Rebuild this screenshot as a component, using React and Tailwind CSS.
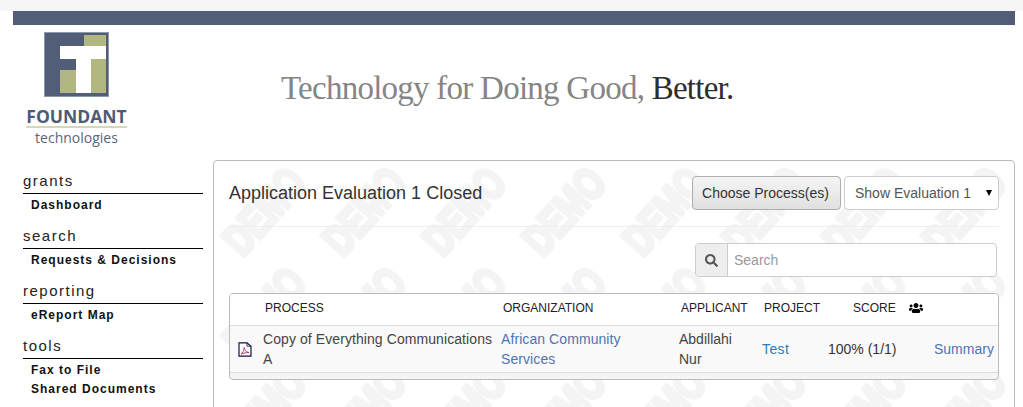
import { FaSearch, FaUsers } from "react-icons/fa";

const menu = [
  { title: "grants", items: ["Dashboard"] },
  { title: "search", items: ["Requests & Decisions"] },
  { title: "reporting", items: ["eReport Map"] },
  { title: "tools", items: ["Fax to File", "Shared Documents"] },
];

const marks = [];
for (let row = 0; row < 3; row++) {
  for (let col = 0; col < 8; col++) {
    marks.push({ key: `${row}-${col}`, left: col * 100 + 50, top: row * 100 + 50 });
  }
}

function Logo() {
  return (
    <div className="flex flex-col items-center w-[101px] ml-[26px] mt-[7px]">
      <svg width="65" height="65" viewBox="0 0 65 65" className="block">
        <rect x="0.5" y="0.5" width="64" height="64" fill="#525e78" stroke="#8f98ab" />
        <rect x="40" y="3" width="22" height="11" fill="#b2b781" />
        <rect x="16" y="38" width="16" height="23" fill="#b2b781" />
        <rect x="47" y="27" width="15" height="34" fill="#b2b781" />
        <rect x="16" y="14" width="46" height="13" fill="#fff" />
        <rect x="32" y="14" width="15" height="47" fill="#fff" />
      </svg>
      <div className="mt-[10px] font-['Open_Sans',sans-serif] font-bold text-[17.5px] leading-[19px] text-[#4f5b75] border-b-2 border-[#d5d8b8] whitespace-nowrap">
        FOUNDANT
      </div>
      <div className="font-['Open_Sans',sans-serif] text-[14px] leading-[16px] text-[#5a6580] mt-[2px]">technologies</div>
    </div>
  );
}

export default function App() {
  return (
    <div className="relative h-[407px] w-[1023px] overflow-hidden bg-white font-['Liberation_Sans',Arial,sans-serif] text-[#333]">
      <div className="h-[11px] bg-[#f6f6f6]" />
      <div className="h-[14px] mx-[13px] w-[1002px] bg-[#525e78]" />

      <div className="flex h-[135px] items-start">
        <Logo />
        <div className="ml-[154px] mt-[39px] font-['Liberation_Serif',serif] text-[33px] leading-[48px] tracking-[-0.75px] text-[#858585] whitespace-nowrap">
          Technology for Doing Good, <span className="text-[#2e2e2e]">Better.</span>
        </div>
      </div>

      <div className="flex">
        <nav className="w-[180px] ml-[23px] pt-[12px] shrink-0">
          {menu.map((group) => (
            <div key={group.title} className="mb-[12px] min-h-[43px]">
              <div className="border-b border-black text-[15px] leading-[18px] h-[22px] tracking-[1.5px] text-[#222]">{group.title}</div>
              <ul className="mt-[2px]">
                {group.items.map((item) => (
                  <li key={item} className="pl-[8px] text-[12px] leading-[19px] font-bold tracking-[1px] text-[#111] whitespace-nowrap">
                    {item}
                  </li>
                ))}
              </ul>
            </div>
          ))}
        </nav>

        <main className="relative ml-[10px] w-[802px] h-[300px] border border-[#bbb] rounded-[4px] overflow-hidden">
          {/* watermark */}
          <div className="absolute inset-0 overflow-hidden select-none">
            {marks.map((m) => (
              <span
                key={m.key}
                className="absolute -translate-x-1/2 -translate-y-1/2 rotate-[-48deg] scale-y-[1.35] font-['Liberation_Sans',sans-serif] font-bold text-[33px] leading-none text-[#f4f4f4] [-webkit-text-stroke:3px_#f4f4f4]"
                style={{ left: m.left, top: m.top }}
              >
                DEMO
              </span>
            ))}
          </div>

          <div className="relative px-[15px]">
            <div className="flex items-center justify-between h-[66px] border-b border-[#eee]">
              <h1 className="text-[18px] leading-[20px] mb-[2px] text-[#333]">Application Evaluation 1 Closed</h1>
              <div className="flex gap-[3px] mb-[2px]">
                <button className="h-[34px] w-[149px] rounded-[4px] border border-[#adadad] bg-gradient-to-b from-[#f5f5f5] to-[#e0e0e0] pt-[1px] pr-[2px] text-[14px] text-[#333]">
                  Choose Process(es)
                </button>
                <div className="relative h-[34px] w-[155px] rounded-[4px] border border-[#ccc] bg-white text-[14px] leading-[32px] pl-[10px] text-[#555]">
                  Show Evaluation 1
                  <span className="absolute right-[6px] top-[13px] h-0 w-0 border-x-[3.5px] border-t-[6px] border-x-transparent border-t-black" />
                </div>
              </div>
            </div>

            <div className="flex justify-end mt-[16px] mr-[2px]">
              <div className="flex h-[34px] w-[302px] rounded-[4px] border border-[#ccc] bg-white">
                <div className="flex w-[32px] items-center justify-center rounded-l-[3px] border-r border-[#ccc] bg-[#eee]">
                  <FaSearch size={13} className="text-[#555]" />
                </div>
                <div className="pl-[6px] text-[14px] leading-[32px] text-[#999]">Search</div>
              </div>
            </div>

            <div className="mt-[16px] h-[87px] rounded-[4px] border border-[#bbb] overflow-hidden bg-[#f5f5f5]">
              <div className="flex h-[31px] items-center pb-[3px] bg-white text-[12px] text-[#222]">
                <span className="ml-[35px] w-[238px]">PROCESS</span>
                <span className="w-[178px]">ORGANIZATION</span>
                <span className="w-[83px]">APPLICANT</span>
                <span className="w-[89px]">PROJECT</span>
                <span className="w-[56px]">SCORE</span>
                <FaUsers size={14} className="text-black" />
              </div>
              <div className="flex h-[48px] items-center border-y border-[#ddd] bg-[#f9f9f9] text-[14px] leading-[20px]">
                <svg width="14" height="15" viewBox="0 0 14 15" fill="#fff" stroke="#1a1040" strokeWidth="1.2" className="ml-[8px] mr-[11px] shrink-0">
                  <path d="M1 .8h8l4 3.4v10H1z" />
                  <path d="M9 .8v3.4h4" fill="none" strokeWidth="0.8" />
                  <path d="M3 12c2-1 3-3.5 3.2-6.5.4 2.7 2 4.5 4.8 5-3 0-5 .6-8 1.5z" fill="none" stroke="#b0306a" strokeWidth="0.9" />
                </svg>
                <span className="w-[238px] text-[#444] tracking-[0.08px]">Copy of Everything Communications A</span>
                <span className="w-[178px] pr-[40px] text-[#4f74b3] tracking-[0.08px]">African Community Services</span>
                <span className="w-[83px] text-[#444]">Abdillahi<br />Nur</span>
                <span className="w-[66px] text-[#337ab7] tracking-[0.4px]">Test</span>
                <span className="w-[106px] text-[#333]">100% (1/1)</span>
                <span className="text-[#4f74b3]">Summary</span>
              </div>
            </div>
          </div>
        </main>
      </div>
    </div>
  );
}
